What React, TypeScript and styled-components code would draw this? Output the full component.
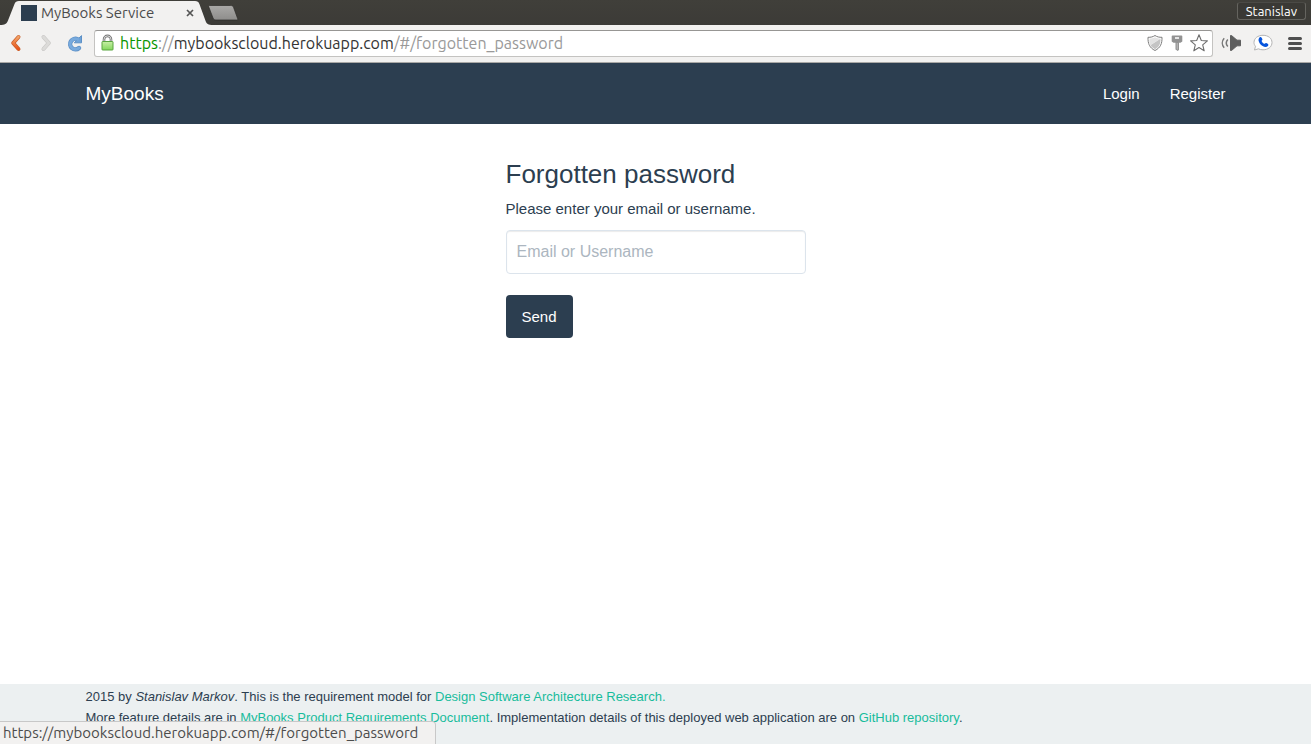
import React from "react";
import styled, { createGlobalStyle } from "styled-components";

const GlobalStyle = createGlobalStyle`
  *, *::before, *::after { box-sizing: border-box; }
  body {
    margin: 0;
    background: #ffffff;
    color: #2c3e50;
    font-family: "Liberation Sans", Arial, sans-serif;
    font-size: 15px;
    line-height: 21px;
  }
  button, input { font: inherit; }
`;

const chromeFont = `Ubuntu, "Noto Sans", "Open Sans", sans-serif`;

const Window = styled.div`
  display: flex;
  flex-direction: column;
  min-height: 100vh;
`;

const TabStrip = styled.header`
  display: flex;
  align-items: flex-start;
  height: 25px;
  background: linear-gradient(#403f3a, #3c3b37);
  font-family: ${chromeFont};
`;

const Tab = styled.div`
  position: relative;
  display: flex;
  align-items: center;
  width: 208px;
  height: 25px;
  padding: 0 12px 0 21px;
`;

const TabShape = styled.svg`
  position: absolute;
  top: 0;
  left: 0;
  width: 216px;
  height: 25px;
`;

const Favicon = styled.span`
  position: relative;
  width: 16px;
  height: 16px;
  margin-right: 4px;
  background: #2c3e50;
`;

const TabTitle = styled.span`
  position: relative;
  flex: 1;
  color: #4c4c4c;
  font-size: 15px;
  line-height: 20px;
  white-space: nowrap;
`;

const PlainButton = styled.button`
  display: flex;
  align-items: center;
  justify-content: center;
  flex: none;
  margin: 0;
  padding: 0;
  border: 0;
  background: transparent;
  cursor: pointer;
`;

const TabClose = styled(PlainButton)`
  position: relative;
  width: 12px;
  height: 16px;
`;

const NewTab = styled(PlainButton)`
  width: 32px;
  height: 25px;
`;

const ProfileButton = styled(PlainButton)`
  height: 18px;
  margin: 2px 5px 0 auto;
  padding: 0 8px;
  border: 1px solid #65645f;
  border-top-color: #4b4a46;
  border-radius: 3px;
  background: #3a3935;
  color: #ffffff;
  font-size: 13px;
  line-height: 16px;
`;

const Toolbar = styled.div`
  display: flex;
  align-items: center;
  height: 38px;
  padding: 0 6px 1px 6px;
  background: #f2f1f0;
  border-bottom: 1px solid #a9a8a6;
`;

const NavButtons = styled.nav`
  display: flex;
  gap: 9px;
  margin-right: 10px;
`;

const IconButton = styled(PlainButton)`
  width: 20px;
  height: 20px;
`;

const Omnibox = styled.div`
  display: flex;
  align-items: center;
  flex: 1;
  min-width: 0;
  height: 27px;
  padding: 0 3px 0 5px;
  background: #ffffff;
  border: 1px solid #c4c3c1;
  border-top-color: #979694;
  border-radius: 3px;
`;

const Address = styled.div`
  flex: 1;
  min-width: 0;
  margin-left: 5px;
  overflow: hidden;
  outline: none;
  color: #999999;
  font-family: ${chromeFont};
  font-size: 16px;
  line-height: 22px;
  white-space: nowrap;
`;

const Scheme = styled.span`
  color: #079500;
`;

const Host = styled.span`
  color: #333333;
`;

const BoxActions = styled.div`
  display: flex;
  gap: 2px;
`;

const Extensions = styled.div`
  display: flex;
  align-items: center;
  gap: 12px;
  margin-left: 8px;
`;

const Container = styled.div`
  width: 100%;
  max-width: 1170px;
  margin: 0 auto;
  padding: 0 15px;
`;

const Navbar = styled.nav`
  background: #2c3e50;
`;

const NavbarRow = styled(Container)`
  display: flex;
  align-items: center;
  justify-content: space-between;
  height: 61px;
`;

const Brand = styled.a`
  color: #ffffff;
  font-size: 19px;
  text-decoration: none;
`;

const NavLinks = styled.div`
  display: flex;
  gap: 30px;
`;

const NavLink = styled.a`
  color: #ffffff;
  text-decoration: none;
`;

const Main = styled.main`
  flex: 1;
  padding: 36px 15px;
`;

const Form = styled.form`
  width: 100%;
  max-width: 300px;
  margin: 0 auto;
`;

const Title = styled.h1`
  margin: 0 0 10px;
  font-size: 26px;
  font-weight: 400;
  line-height: 28px;
`;

const Hint = styled.label`
  display: block;
  margin-bottom: 11px;
`;

const TextInput = styled.input`
  display: block;
  width: 100%;
  height: 44px;
  margin-bottom: 21px;
  padding: 0 10px;
  border: 1px solid #dce4ec;
  border-radius: 4px;
  background: #ffffff;
  box-shadow: inset 0 1px 1px rgba(0, 0, 0, 0.08);
  color: #2c3e50;
  font-size: 16px;
  &::placeholder {
    color: #acb6c0;
    opacity: 1;
  }
`;

const SubmitButton = styled.button`
  height: 43px;
  padding: 0 16px;
  border: 0;
  border-radius: 4px;
  background: #2c3e50;
  color: #ffffff;
  cursor: pointer;
`;

const Footer = styled.footer`
  height: 60px;
  padding-top: 2px;
  background: #ecf0f1;
  font-size: 13px;
`;

const FooterLine = styled.p`
  margin: 0;
`;

const FooterLink = styled.a`
  color: #18bc9c;
  text-decoration: none;
`;

const StatusBubble = styled.div`
  position: fixed;
  bottom: 0;
  left: 0;
  min-width: 436px;
  height: 23px;
  padding: 0 3px;
  background: #f2f1f0;
  border: 1px solid #c8c8c8;
  border-width: 1px 1px 0 0;
  border-top-right-radius: 4px;
  color: #4c4c4c;
  font-family: ${chromeFont};
  font-size: 15px;
  line-height: 22px;
  white-space: nowrap;
`;

const BackIcon = () => (
  <svg width="20" height="20" viewBox="0 0 20 20" fill="none">
    <defs>
      <linearGradient id="back" x1="0" y1="0" x2="0" y2="1">
        <stop offset="0" stopColor="#f3a468" />
        <stop offset="1" stopColor="#e8541b" />
      </linearGradient>
    </defs>
    <path d="M12.500 4 7.200 10l5.300 6" stroke="#c8602c" strokeWidth="4" strokeLinecap="round" strokeLinejoin="round" />
    <path d="M12.500 4 7.200 10l5.300 6" stroke="url(#back)" strokeWidth="2.600" strokeLinecap="round" strokeLinejoin="round" />
  </svg>
);

const ForwardIcon = () => (
  <svg width="20" height="20" viewBox="0 0 20 20" fill="none">
    <path d="m8.500 4 5.300 6-5.300 6" stroke="#c6c5c3" strokeWidth="4" strokeLinecap="round" strokeLinejoin="round" />
    <path d="m8.500 4 5.300 6-5.300 6" stroke="#dcdbd9" strokeWidth="2.800" strokeLinecap="round" strokeLinejoin="round" />
  </svg>
);

const ReloadIcon = () => (
  <svg width="20" height="20" viewBox="0 0 20 20" fill="none">
    <path d="M13.600 6.200A5.300 5.300 0 1 0 15 15" stroke="#5d90c6" strokeWidth="4.400" strokeLinecap="round" />
    <path d="M17.500 2.600v7.200h-7.200z" fill="#6fa3d8" stroke="#5d90c6" strokeLinejoin="round" />
    <path d="M13.600 6.200A5.300 5.300 0 1 0 15 15" stroke="#78aadd" strokeWidth="3" strokeLinecap="round" />
  </svg>
);

const LockIcon = () => (
  <svg width="15" height="18" viewBox="0 0 15 18" fill="none">
    <defs>
      <linearGradient id="lock" x1="0" y1="0" x2="0" y2="1">
        <stop offset="0" stopColor="#c8efa6" />
        <stop offset="1" stopColor="#83d75c" />
      </linearGradient>
    </defs>
    <path d="M4 8V5.400a3.500 3.500 0 0 1 7 0V8" stroke="#777" strokeWidth="2.600" />
    <path d="M4 8V5.400a3.500 3.500 0 0 1 7 0V8" stroke="#d8d8d8" strokeWidth="1" />
    <rect x="2" y="7.500" width="11" height="8.500" rx=".6" fill="url(#lock)" stroke="#5aa540" />
  </svg>
);

const ShieldIcon = () => (
  <svg width="20" height="20" viewBox="0 0 20 20">
    <path d="M10 2.500c2 1.400 4.400 1.900 7 1.800.2 6.200-1.500 10.500-7 13.200-5.500-2.700-7.200-7-7-13.200 2.600.1 5-.4 7-1.800z" fill="#fff" stroke="#7d7d7d" />
    <path d="M10 4.200c1.700 1 3.500 1.400 5.500 1.400L4.800 12.400C4.300 10.300 4.400 8 4.500 5.600c2 0 3.800-.4 5.500-1.400z" fill="#e2e2e2" />
    <path d="M15.500 5.800c.1 4.800-1.200 8.200-5.500 10.400-2.200-1.100-3.700-2.400-4.600-3.900z" fill="#c4c4c4" />
  </svg>
);

const KeyIcon = () => (
  <svg width="20" height="20" viewBox="0 0 20 20">
    <path fillRule="evenodd" d="M5.500 2.500h9a.8.8 0 0 1 .8.8v5.200l-1.800 1.200h-1.500v7L10.800 18 8.500 16.500V9.700h-2L4.700 8.500V3.300a.8.8 0 0 1 .8-.8zM8 4.300v1.500h4V4.300z" fill="#929292" />
    <path d="M10.200 10v6.500" stroke="#c2c2c2" />
  </svg>
);

const StarIcon = () => (
  <svg width="20" height="20" viewBox="0 0 20 20">
    <path d="m10 1.800 2.300 5.700 6.100.4-4.700 3.900 1.500 6-5.200-3.300-5.200 3.300 1.500-6L1.600 7.900l6.100-.4z" fill="#fff" stroke="#6d6d6d" strokeWidth="1.100" strokeLinejoin="round" />
  </svg>
);

const SpeakerIcon = () => (
  <svg width="20" height="20" viewBox="0 0 20 20" fill="none">
    <path d="M9.500 2.500h1L16 7.200h3.500v5.600H16l-5.500 4.700h-1z" fill="#5e5e5e" stroke="#5e5e5e" strokeLinejoin="round" />
    <path d="M3.200 5.200c-2.500 2.800-2.500 6.800 0 9.600M6.800 6.400c-1.900 2.200-1.900 5 0 7.200" stroke="#777" strokeWidth="1.500" />
  </svg>
);

const PhoneIcon = () => (
  <svg width="20" height="20" viewBox="0 0 20 20">
    <path d="M10 2.300c5.200 0 9 3 9 7.200 0 4.300-3.800 7.300-9 7.300-1.700 0-3.200-.3-4.600-1L1.500 17l1-3.800C1.500 12.200 1 11 1 9.500c0-4.200 3.800-7.200 9-7.200z" fill="#fff" stroke="#b4b4b4" />
    <path d="M6.500 4.400c.7-.6 1.800-.3 2.300.5l.6 1.300c.2.700-.7 1.100-.8 1.700.5 1.400 1.500 2.400 2.900 2.900.6-.1 1-1 1.700-.8l1.500.8c.8.500.9 1.500.2 2.200-1.200 1.200-3.300 1.300-5.300 0-2.200-1.300-3.500-3-4-5.200-.2-1.400.1-2.600.9-3.400z" fill="#0755dd" />
  </svg>
);

const MenuIcon = () => (
  <svg width="16" height="20" viewBox="0 0 16 20">
    <path d="M2.500 5.500h11M2.500 10.500h11M2.500 15.500h11" stroke="#4f4f4f" strokeWidth="3" strokeLinecap="round" />
  </svg>
);

const CloseIcon = () => (
  <svg width="12" height="12" viewBox="0 0 12 12">
    <path d="m3 3 6 6M9 3 3 9" stroke="#555" strokeWidth="1.700" />
  </svg>
);

const NewTabIcon = () => (
  <svg width="32" height="25" viewBox="0 0 32 25">
    <defs>
      <linearGradient id="newtab" x1="0" y1="0" x2="0" y2="1">
        <stop offset="0" stopColor="#aaa9a7" />
        <stop offset="1" stopColor="#8e8d8b" />
      </linearGradient>
    </defs>
    <path d="M1.500 5.500h21c1.600 0 2.600.5 3.100 2l4 11c.4 1-.1 1.500-1 1.500H8c-1.500 0-2.400-.6-3-2L.8 7c-.4-1-.2-1.500.7-1.500z" fill="url(#newtab)" stroke="#2c2b28" strokeWidth=".7" />
  </svg>
);

const pageUrl = "https://mybookscloud.herokuapp.com/#/forgotten_password";

export default function App() {
  return (
    <Window>
      <GlobalStyle />
      <TabStrip>
        <Tab>
          <TabShape viewBox="0 0 216 25" aria-hidden="true">
            <path d="M0 25c5 0 6.500-1 8-4.500L14.500 4c1-2.300 2-3 4.500-3h176c2.500 0 3.500.7 4.400 3l6 16.500c1.300 3.500 2.600 4.500 7.600 4.500z" fill="#f2f1f0" />
          </TabShape>
          <Favicon />
          <TabTitle>MyBooks Service</TabTitle>
          <TabClose type="button" aria-label="Close tab"><CloseIcon /></TabClose>
        </Tab>
        <NewTab type="button" aria-label="New tab"><NewTabIcon /></NewTab>
        <ProfileButton type="button">Stanislav</ProfileButton>
      </TabStrip>
      <Toolbar>
        <NavButtons aria-label="History">
          <IconButton type="button" aria-label="Back"><BackIcon /></IconButton>
          <IconButton type="button" aria-label="Forward"><ForwardIcon /></IconButton>
          <IconButton type="button" aria-label="Reload"><ReloadIcon /></IconButton>
        </NavButtons>
        <Omnibox>
          <LockIcon />
          <Address role="textbox" aria-label="Address" contentEditable suppressContentEditableWarning spellCheck={false}>
            <Scheme>https</Scheme>://<Host>mybookscloud.herokuapp.com</Host>/#/forgotten_password
          </Address>
          <BoxActions>
            <IconButton type="button" aria-label="Page shield"><ShieldIcon /></IconButton>
            <IconButton type="button" aria-label="Saved passwords"><KeyIcon /></IconButton>
            <IconButton type="button" aria-label="Bookmark"><StarIcon /></IconButton>
          </BoxActions>
        </Omnibox>
        <Extensions>
          <IconButton type="button" aria-label="Sound"><SpeakerIcon /></IconButton>
          <IconButton type="button" aria-label="Call"><PhoneIcon /></IconButton>
          <IconButton type="button" aria-label="Menu"><MenuIcon /></IconButton>
        </Extensions>
      </Toolbar>
      <Navbar aria-label="Site">
        <NavbarRow>
          <Brand href="#/">MyBooks</Brand>
          <NavLinks>
            <NavLink href="#/login">Login</NavLink>
            <NavLink href="#/register">Register</NavLink>
          </NavLinks>
        </NavbarRow>
      </Navbar>
      <Main>
        <Form onSubmit={(e) => e.preventDefault()}>
          <Title>Forgotten password</Title>
          <Hint htmlFor="account">Please enter your email or username.</Hint>
          <TextInput id="account" type="text" placeholder="Email or Username" />
          <SubmitButton type="submit">Send</SubmitButton>
        </Form>
      </Main>
      <Footer>
        <Container>
          <FooterLine>
            2015 by <em>Stanislav Markov</em>. This is the requirement model for{" "}
            <FooterLink href="#/research">Design Software Architecture Research.</FooterLink>
          </FooterLine>
          <FooterLine>
            More feature details are in <FooterLink href="#/requirements">MyBooks Product Requirements Document</FooterLink>.
            Implementation details of this deployed web application are on{" "}
            <FooterLink href="#/repository">GitHub repository</FooterLink>.
          </FooterLine>
        </Container>
      </Footer>
      <StatusBubble role="status">{pageUrl}</StatusBubble>
    </Window>
  );
}
